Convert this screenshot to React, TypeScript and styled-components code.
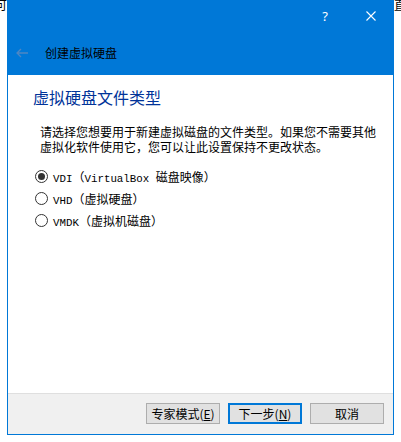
import React from "react";
import styled, { createGlobalStyle } from "styled-components";

const GlobalStyle = createGlobalStyle`
  html, body { margin: 0; padding: 0; background: #ffffff; }
  body { font-family: "Noto Sans CJK SC", "Noto Sans", sans-serif; }
  * { box-sizing: border-box; }
`;

const Desktop = styled.div`
  position: relative;
  width: 401px;
  height: 442px;
  overflow: hidden;
  background: #ffffff;
`;

const BgGlyph = styled.span<{ $left: number }>`
  position: absolute;
  top: -2px;
  left: ${(p) => p.$left}px;
  font-size: 12px;
  line-height: 14px;
  color: #000;
  font-family: "Noto Sans CJK SC", sans-serif;
`;

const Window = styled.div`
  position: relative;
  margin-left: 7px;
  width: 387px;
  height: 435px;
  display: flex;
  flex-direction: column;
  border: 1px solid #0078d7;
  border-top: none;
  background: #ffffff;
`;

const Header = styled.div`
  background: #0078d7;
  margin: 0 -1px;
  height: 75px;
  display: flex;
  flex-direction: column;
`;

const TitleBar = styled.div`
  height: 31px;
  display: flex;
  justify-content: flex-end;
`;

const CaptionButton = styled.div`
  width: 46px;
  height: 31px;
  display: flex;
  align-items: center;
  justify-content: center;
  color: #ffffff;
  font-family: "Noto Sans", "DejaVu Sans", sans-serif;
  font-size: 13px;
`;

const NavRow = styled.div`
  flex: 1;
  display: flex;
  align-items: center;
  padding-left: 9px;
  gap: 17px;
  padding-bottom: 1px;
`;

const NavTitle = styled.span`
  font-size: 12px;
  line-height: 14px;
  color: #000000;
`;

const Body = styled.div`
  flex: 1;
  display: flex;
  flex-direction: column;
  padding-top: 12px;
`;

const Heading = styled.div`
  margin-left: 25px;
  font-size: 16px;
  line-height: 20px;
  color: #003399;
`;

const Description = styled.div`
  margin: 17px 0 0 32px;
  width: 345px;
  font-size: 12px;
  line-height: 15px;
  color: #000000;
`;

const RadioList = styled.div`
  margin: 11px 0 0 27px;
  display: flex;
  flex-direction: column;
`;

const RadioRow = styled.label`
  height: 22px;
  display: flex;
  align-items: center;
  gap: 5px;
  font-size: 12px;
  color: #000;
`;

const Latin = styled.span`
  font-family: "Liberation Mono", monospace;
  font-size: 10.8px;
`;

const RadioCircle = styled.span<{ $checked?: boolean }>`
  width: 13px;
  height: 13px;
  border-radius: 50%;
  border: 1px solid #333333;
  background: #ffffff;
  display: flex;
  align-items: center;
  justify-content: center;
  &::after {
    content: "";
    width: 7px;
    height: 7px;
    border-radius: 50%;
    background: ${(p) => (p.$checked ? "#333333" : "transparent")};
  }
`;

const Footer = styled.div`
  height: 41px;
  background: #f0f0f0;
  border-top: 1px solid #dfdfdf;
  display: flex;
  justify-content: flex-end;
  align-items: flex-start;
  padding: 9px 9px 0 0;
  gap: 8px;
`;

const Button = styled.div<{ $default?: boolean }>`
  width: 74px;
  height: 21px;
  background: #e1e1e1;
  border: ${(p) => (p.$default ? "2px solid #0078d7" : "1px solid #adadad")};
  display: flex;
  align-items: center;
  justify-content: center;
  font-size: 12px;
  color: #000;
  u { text-decoration: underline; }
`;

export default function App() {
  return (
    <>
      <GlobalStyle />
      <Desktop>
        <BgGlyph $left={-5}>可</BgGlyph>
        <BgGlyph $left={394}>直</BgGlyph>
        <Window>
          <Header>
            <TitleBar>
              <CaptionButton>?</CaptionButton>
              <CaptionButton>
                <svg width="10" height="10" viewBox="0 0 10 10">
                  <path d="M0.5 0.5 L9.5 9.5 M9.5 0.5 L0.5 9.5" stroke="#ffffff" strokeWidth="1.1" />
                </svg>
              </CaptionButton>
            </TitleBar>
            <NavRow>
              <svg width="12" height="10" viewBox="0 0 12 10">
                <path d="M1 5 H12 M5 1 L1 5 L5 9" stroke="#4f86c2" strokeWidth="1.3" fill="none" />
              </svg>
              <NavTitle>创建虚拟硬盘</NavTitle>
            </NavRow>
          </Header>
          <Body>
            <Heading>虚拟硬盘文件类型</Heading>
            <Description>
              请选择您想要用于新建虚拟磁盘的文件类型。如果您不需要其他虚拟化软件使用它，您可以让此设置保持不更改状态。
            </Description>
            <RadioList>
              <RadioRow>
                <RadioCircle $checked />
                <span>
                  <Latin>VDI</Latin>（<Latin>VirtualBox </Latin>磁盘映像）
                </span>
              </RadioRow>
              <RadioRow>
                <RadioCircle />
                <span>
                  <Latin>VHD</Latin>（虚拟硬盘）
                </span>
              </RadioRow>
              <RadioRow>
                <RadioCircle />
                <span>
                  <Latin>VMDK</Latin>（虚拟机磁盘）
                </span>
              </RadioRow>
            </RadioList>
          </Body>
          <Footer>
            <Button>
              专家模式(<u>E</u>)
            </Button>
            <Button $default>
              下一步(<u>N</u>)
            </Button>
            <Button>取消</Button>
          </Footer>
        </Window>
      </Desktop>
    </>
  );
}
